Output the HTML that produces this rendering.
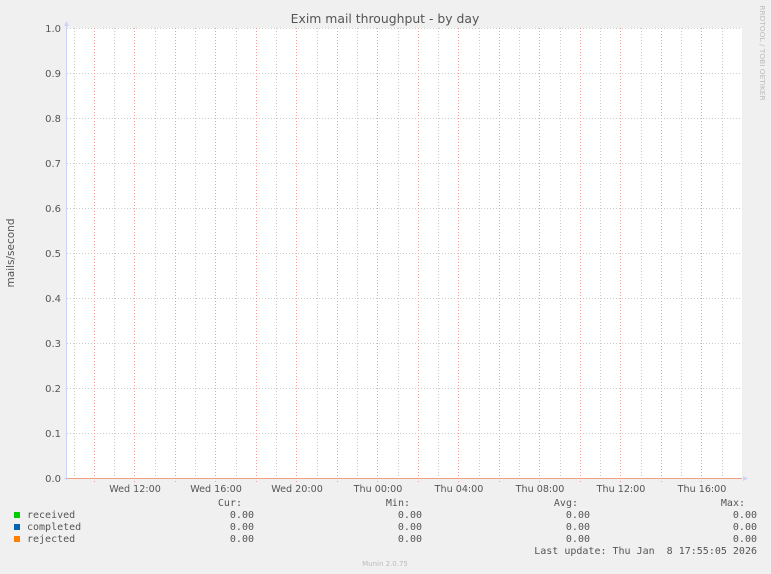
<!DOCTYPE html>
<html><head><style>
html,body{margin:0;padding:0;background:#f0f0f0;}
svg{display:block}
text{font-family:"DejaVu Sans","Liberation Sans",sans-serif;fill:#555;}
.m{font-family:"DejaVu Sans Mono","Liberation Mono",monospace;font-size:10px;fill:#555;}
</style></head><body>
<svg width="771" height="574" xmlns="http://www.w3.org/2000/svg">
<rect width="771" height="574" fill="#f0f0f0"/>
<rect x="67" y="28" width="675" height="450" fill="#fff"/>
<g stroke="#ccc" stroke-width="1" stroke-dasharray="1,2">
<line x1="67" y1="28.5" x2="742" y2="28.5"/><line x1="67" y1="73.5" x2="742" y2="73.5"/><line x1="67" y1="118.5" x2="742" y2="118.5"/><line x1="67" y1="163.5" x2="742" y2="163.5"/><line x1="67" y1="208.5" x2="742" y2="208.5"/><line x1="67" y1="253.5" x2="742" y2="253.5"/><line x1="67" y1="298.5" x2="742" y2="298.5"/><line x1="67" y1="343.5" x2="742" y2="343.5"/><line x1="67" y1="388.5" x2="742" y2="388.5"/><line x1="67" y1="433.5" x2="742" y2="433.5"/>
<line x1="74.5" y1="28" x2="74.5" y2="478"/><line x1="114.5" y1="28" x2="114.5" y2="478"/><line x1="155.5" y1="28" x2="155.5" y2="478"/><line x1="195.5" y1="28" x2="195.5" y2="478"/><line x1="236.5" y1="28" x2="236.5" y2="478"/><line x1="276.5" y1="28" x2="276.5" y2="478"/><line x1="317.5" y1="28" x2="317.5" y2="478"/><line x1="357.5" y1="28" x2="357.5" y2="478"/><line x1="398.5" y1="28" x2="398.5" y2="478"/><line x1="438.5" y1="28" x2="438.5" y2="478"/><line x1="479.5" y1="28" x2="479.5" y2="478"/><line x1="519.5" y1="28" x2="519.5" y2="478"/><line x1="560.5" y1="28" x2="560.5" y2="478"/><line x1="600.5" y1="28" x2="600.5" y2="478"/><line x1="641.5" y1="28" x2="641.5" y2="478"/><line x1="681.5" y1="28" x2="681.5" y2="478"/><line x1="722.5" y1="28" x2="722.5" y2="478"/>
</g>
<g stroke="#f2a0a0" stroke-width="1" stroke-dasharray="1,2">
<line x1="94.5" y1="28" x2="94.5" y2="482"/><line x1="134.5" y1="28" x2="134.5" y2="482"/><line x1="175.5" y1="28" x2="175.5" y2="482"/><line x1="215.5" y1="28" x2="215.5" y2="482"/><line x1="256.5" y1="28" x2="256.5" y2="482"/><line x1="296.5" y1="28" x2="296.5" y2="482"/><line x1="337.5" y1="28" x2="337.5" y2="482"/><line x1="377.5" y1="28" x2="377.5" y2="482"/><line x1="418.5" y1="28" x2="418.5" y2="482"/><line x1="458.5" y1="28" x2="458.5" y2="482"/><line x1="499.5" y1="28" x2="499.5" y2="482"/><line x1="539.5" y1="28" x2="539.5" y2="482"/><line x1="580.5" y1="28" x2="580.5" y2="482"/><line x1="620.5" y1="28" x2="620.5" y2="482"/><line x1="661.5" y1="28" x2="661.5" y2="482"/><line x1="701.5" y1="28" x2="701.5" y2="482"/>
</g>
<line x1="66.5" y1="24" x2="66.5" y2="480" stroke="#ccd4f4" stroke-width="1"/>
<polygon points="64,26 69,26 66.5,21" fill="#ccd4f4"/>
<line x1="64" y1="478.5" x2="742" y2="478.5" stroke="#ccd4f4"/>
<line x1="67" y1="478.5" x2="742" y2="478.5" stroke="#f0a080"/>
<polygon points="743,476 743,481 748,478.5" fill="#ccd4f4"/>
<g font-size="10" text-anchor="end">
<text x="61" y="32">1.0</text><text x="61" y="77">0.9</text><text x="61" y="122">0.8</text><text x="61" y="167">0.7</text><text x="61" y="212">0.6</text><text x="61" y="257">0.5</text><text x="61" y="302">0.4</text><text x="61" y="347">0.3</text><text x="61" y="392">0.2</text><text x="61" y="437">0.1</text><text x="61" y="482">0.0</text>
</g>
<g font-size="9.6" text-anchor="middle">
<text x="135" y="492">Wed 12:00</text><text x="216" y="492">Wed 16:00</text><text x="297" y="492">Wed 20:00</text><text x="378" y="492">Thu 00:00</text><text x="459" y="492">Thu 04:00</text><text x="540" y="492">Thu 08:00</text><text x="621" y="492">Thu 12:00</text><text x="702" y="492">Thu 16:00</text>
</g>
<text x="385" y="23" font-size="12.4" text-anchor="middle">Exim mail throughput - by day</text>
<text transform="translate(14,253) rotate(-90)" font-size="10.5" text-anchor="middle">mails/second</text>
<text transform="translate(760,53) rotate(90)" font-size="7.4" style="fill:#bbb" text-anchor="middle">RRDTOOL / TOBI OETIKER</text>
<rect x="14" y="512" width="6" height="6" fill="#00cc00"/>
<rect x="14" y="524" width="6" height="6" fill="#0066b3"/>
<rect x="14" y="536" width="6" height="6" fill="#ff8000"/>
<g class="m">
<text class="m" x="27" y="518">received</text>
<text class="m" x="27" y="530">completed</text>
<text class="m" x="27" y="542">rejected</text>
<text class="m" x="242" y="506" text-anchor="end">Cur:</text>
<text class="m" x="410" y="506" text-anchor="end">Min:</text>
<text class="m" x="578" y="506" text-anchor="end">Avg:</text>
<text class="m" x="745" y="506" text-anchor="end">Max:</text>
<text class="m" x="254" y="518" text-anchor="end">0.00</text><text class="m" x="254" y="530" text-anchor="end">0.00</text><text class="m" x="254" y="542" text-anchor="end">0.00</text>
<text class="m" x="422" y="518" text-anchor="end">0.00</text><text class="m" x="422" y="530" text-anchor="end">0.00</text><text class="m" x="422" y="542" text-anchor="end">0.00</text>
<text class="m" x="590" y="518" text-anchor="end">0.00</text><text class="m" x="590" y="530" text-anchor="end">0.00</text><text class="m" x="590" y="542" text-anchor="end">0.00</text>
<text class="m" x="757" y="518" text-anchor="end">0.00</text><text class="m" x="757" y="530" text-anchor="end">0.00</text><text class="m" x="757" y="542" text-anchor="end">0.00</text>
<text class="m" x="757" y="554" text-anchor="end" xml:space="preserve">Last update: Thu Jan  8 17:55:05 2026</text>
</g>
<text x="385" y="566" font-size="7" text-anchor="middle" style="fill:#bbb">Munin 2.0.75</text>
</svg>
</body></html>
